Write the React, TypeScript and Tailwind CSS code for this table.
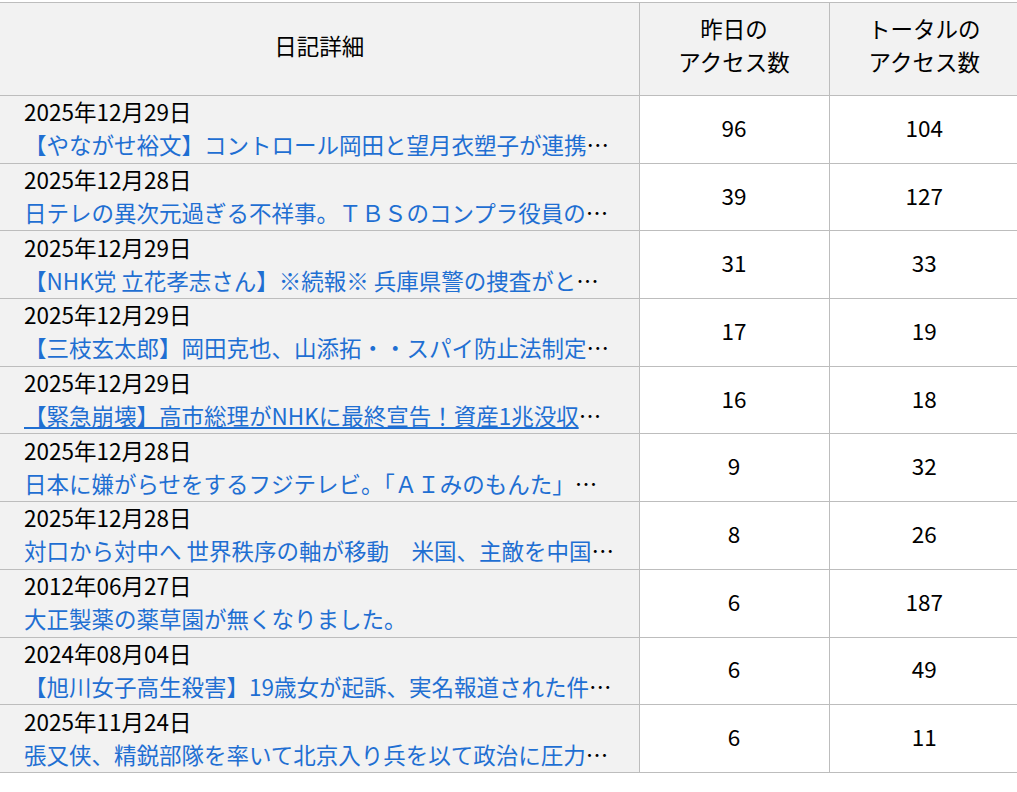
const rows = [
  { date: "2025年12月29日", title: "【やながせ裕文】コントロール岡田と望月衣塑子が連携して政権を攻撃", y: 96, t: 104 },
  { date: "2025年12月28日", title: "日テレの異次元過ぎる不祥事。ＴＢＳのコンプラ役員の発言が話題に", y: 39, t: 127 },
  { date: "2025年12月29日", title: "【NHK党 立花孝志さん】※続報※ 兵庫県警の捜査がとうとう始まる", y: 31, t: 33 },
  { date: "2025年12月29日", title: "【三枝玄太郎】岡田克也、山添拓・・スパイ防止法制定に反対する理由", y: 17, t: 19 },
  { date: "2025年12月29日", title: "【緊急崩壊】高市総理がNHKに最終宣告！資産1兆没収へ、受信料制度も終了か", y: 16, t: 18, hover: true },
  { date: "2025年12月28日", title: "日本に嫌がらせをするフジテレビ。「ＡＩみのもんた」が登場", y: 9, t: 32 },
  { date: "2025年12月28日", title: "対口から対中へ 世界秩序の軸が移動　米国、主敵を中国に定める", y: 8, t: 26 },
  { date: "2012年06月27日", title: "大正製薬の薬草園が無くなりました。", y: 6, t: 187 },
  { date: "2024年08月04日", title: "【旭川女子高生殺害】19歳女が起訴、実名報道された件について", y: 6, t: 49 },
  { date: "2025年11月24日", title: "張又侠、精鋭部隊を率いて北京入り兵を以て政治に圧力をかける", y: 6, t: 11 },
];

export default function App() {
  return (
    <div
      className="w-[1017px] h-[792px] bg-white overflow-hidden pt-[2px] text-[22.5px] text-black"
      style={{ fontFamily: '"Noto Sans CJK JP", "Noto Sans", sans-serif' }}
    >
      <table className="w-[1019px] border-collapse table-fixed">
        <colgroup>
          <col className="w-[639px]" />
          <col className="w-[190px]" />
          <col className="w-[190px]" />
        </colgroup>
        <thead>
          <tr className="bg-[#f2f2f2] border-t border-b border-[#bdbdbd] h-[93px]">
            <th className="font-normal text-center leading-[33px] pb-2 border-r border-[#bdbdbd]">日記詳細</th>
            <th className="font-normal text-center leading-[33px] pb-2 border-r border-[#bdbdbd]">
              昨日の
              <br />
              アクセス数
            </th>
            <th className="font-normal text-center leading-[33px] pb-2">
              トータルの
              <br />
              アクセス数
            </th>
          </tr>
        </thead>
        <tbody>
          {rows.map((r, i) => (
            <tr key={i} className="border-b border-[#bdbdbd] h-[67.7px]">
              <td className="bg-[#f2f2f2] border-r border-[#bdbdbd] pl-6 pr-6 py-0 leading-[33px] align-middle">
                <div className="whitespace-nowrap h-[33px] -mt-[2px]">{r.date}</div>
                <div className="whitespace-nowrap overflow-hidden text-ellipsis h-[33px]">
                  <a href="#" className={`text-[#1f6fd2] ${r.hover ? "underline" : "no-underline"}`}>
                    {r.title}
                  </a>
                </div>
              </td>
              <td className="text-center border-r border-[#bdbdbd] align-middle leading-[30px] pb-[5px]">{r.y}</td>
              <td className="text-center align-middle leading-[30px] pb-[5px]">{r.t}</td>
            </tr>
          ))}
        </tbody>
      </table>
    </div>
  );
}
